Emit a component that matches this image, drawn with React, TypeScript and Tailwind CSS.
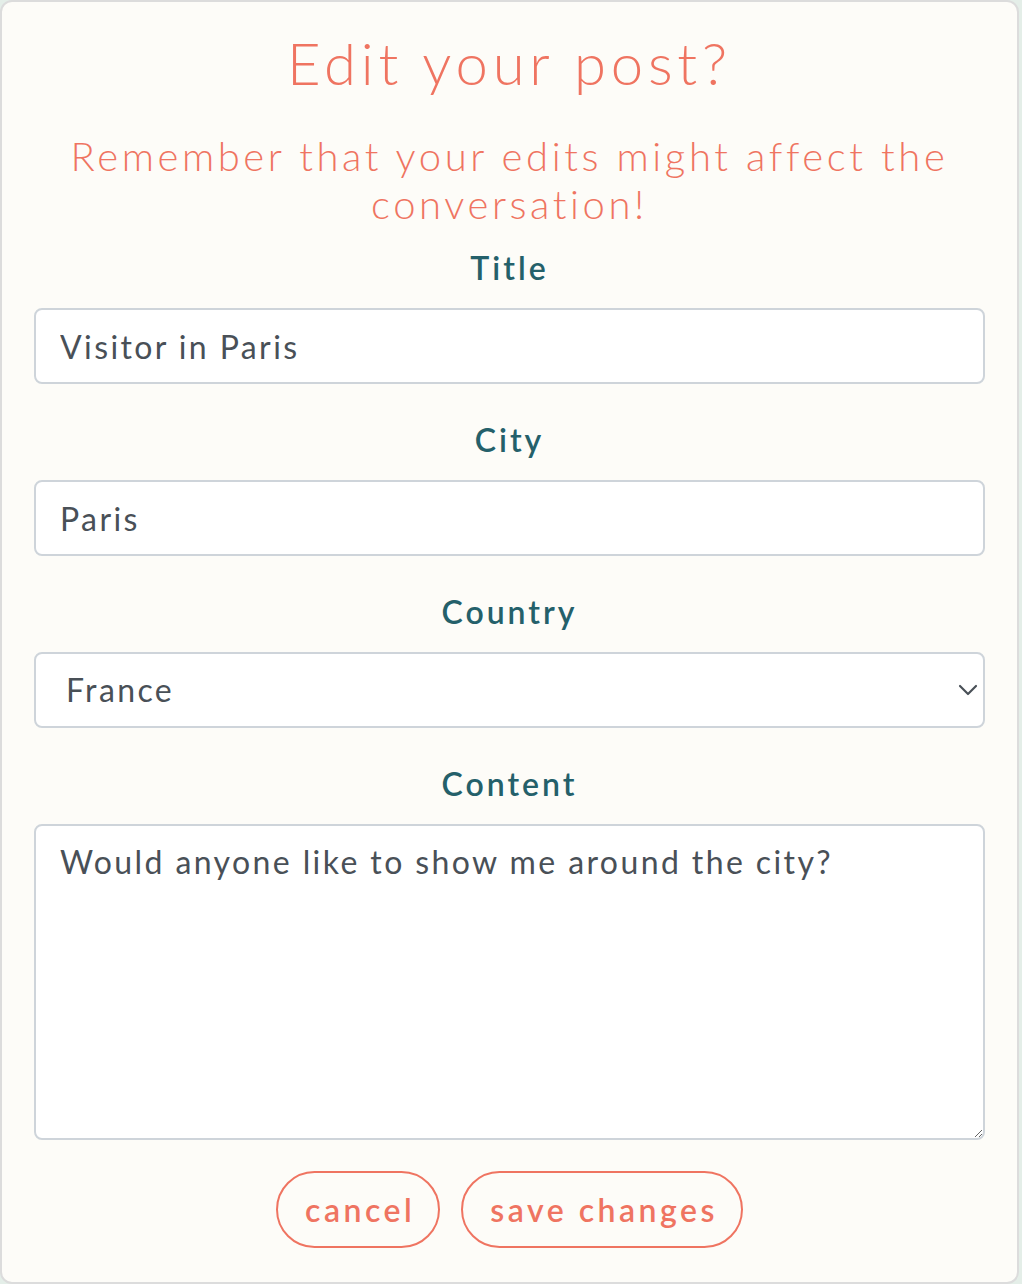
import { ChevronDown } from 'lucide-react'

const font = "font-['Lato','Noto_Sans',sans-serif]"

function Label({ children }: { children: string }) {
  return (
    <label className="mb-[16px] block text-center text-[32px] font-semibold leading-[48px] tracking-[3px] text-[#24606a]">
      {children}
    </label>
  )
}

const inputCls =
  'block h-[76px] w-full rounded-[8px] border-2 border-[#ced4da] bg-white px-[24px] text-[32px] leading-[48px] tracking-[2.4px] text-[#495057] outline-none'

const btnCls =
  'h-[77px] rounded-full border-2 border-[#ef7461] pl-[27px] pr-[23px] text-[32px] font-semibold tracking-[3.5px] text-[#ef7461]'

export default function App() {
  return (
    <div className={`min-h-[1284px] w-[1022px] bg-[#e4eee8] ${font}`}>
      <div className="h-[1284px] w-[1019px] rounded-[12px] border-2 border-[#dcdcdc] bg-[#fdfcf8] px-[32px] pt-[27px]">
        <h1 className="text-center text-[58px] font-light leading-[67px] tracking-[4.8px] text-[#ef7461]">
          Edit your post?
        </h1>
        <p className="mx-auto mt-[36px] max-w-[930px] text-center text-[40px] font-light leading-[48px] tracking-[3.6px] text-[#ef7461]">
          Remember that your edits might affect the conversation!
        </p>

        <form className="mt-[16px]">
          <div>
            <Label>Title</Label>
            <input className={inputCls} defaultValue="Visitor in Paris" />
          </div>
          <div className="mt-[32px]">
            <Label>City</Label>
            <input className={inputCls} defaultValue="Paris" />
          </div>
          <div className="mt-[32px]">
            <Label>Country</Label>
            <div className="relative">
              <select
                className={`${inputCls} appearance-none pl-[30px]`}
                defaultValue="France"
              >
                <option>France</option>
                <option>Italy</option>
                <option>Spain</option>
              </select>
              <ChevronDown
                className="pointer-events-none absolute right-[1px] top-1/2 h-[32px] w-[32px] -translate-y-1/2 text-[#495057]"
                strokeWidth={1.6}
              />
            </div>
          </div>
          <div className="mt-[32px]">
            <Label>Content</Label>
            <textarea
              className="block h-[316px] w-full rounded-[8px] border-2 border-[#ced4da] bg-white px-[24px] py-[12px] text-[32px] leading-[48px] tracking-[2.4px] text-[#495057] outline-none"
              defaultValue="Would anyone like to show me around the city?"
            />
          </div>

          <div className="mt-[31px] flex justify-center gap-[21px]">
            <button type="button" className={btnCls}>
              cancel
            </button>
            <button type="button" className={btnCls}>
              save changes
            </button>
          </div>
        </form>
      </div>
    </div>
  )
}
